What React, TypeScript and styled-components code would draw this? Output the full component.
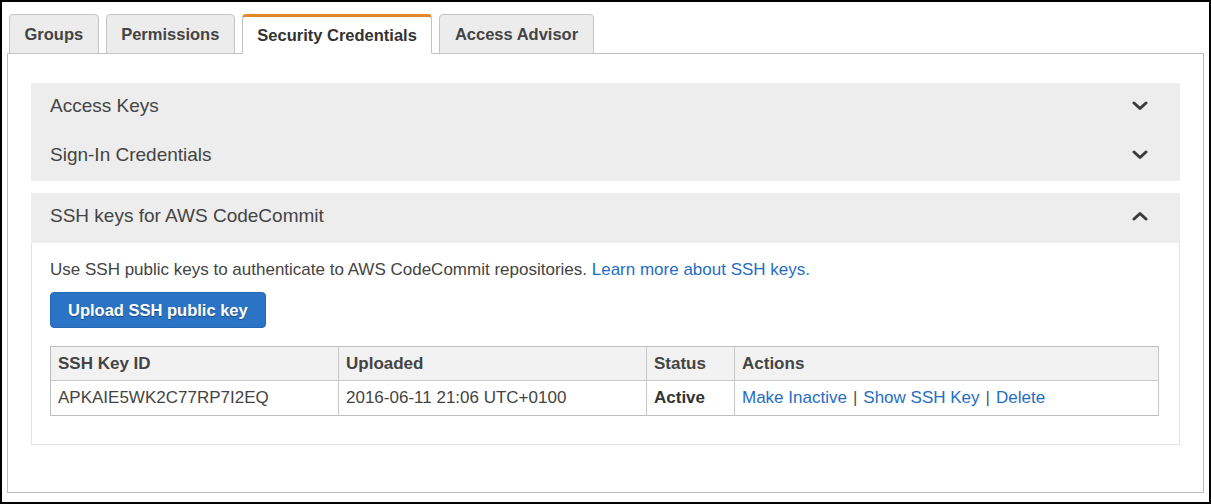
import React from "react";
import styled, { createGlobalStyle } from "styled-components";

const Global = createGlobalStyle`
  html, body { margin: 0; padding: 0; background: #fff; }
  body { font-family: "Liberation Sans", Arial, Helvetica, sans-serif; color: #444; }
  * { box-sizing: border-box; }
`;

const Frame = styled.div`
  width: 1211px;
  height: 504px;
  border: 2px solid #000;
  padding: 12px 5px 0 5px;
  display: flex;
  flex-direction: column;
  background: #fff;
`;

const TabBar = styled.div`
  display: flex;
  gap: 7px;
  padding-left: 2px;
  margin-bottom: -1px;
  position: relative;
  z-index: 1;
`;

const Tab = styled.div<{ $active?: boolean }>`
  height: 40px;
  padding: 0 14.5px;
  display: flex;
  align-items: center;
  font-size: 16.5px;
  font-weight: bold;
  color: ${(p) => (p.$active ? "#333" : "#444")};
  background: ${(p) => (p.$active ? "#fff" : "#ececec")};
  border: 1px solid #c4c4c4;
  border-top: ${(p) => (p.$active ? "3px solid #e0892c" : "1px solid #c4c4c4")};
  border-bottom: 1px solid ${(p) => (p.$active ? "#fff" : "#c4c4c4")};
  border-radius: 4px 4px 0 0;
`;

const Panel = styled.div`
  border: 1px solid #bdbdbd;
  padding: 29px 23px 47px 23px;
  display: flex;
  flex-direction: column;
`;

const SectionGroup = styled.div`
  display: flex;
  flex-direction: column;
  margin-bottom: 12px;
`;

const SectionHeader = styled.div<{ $tall?: boolean }>`
  height: ${(p) => (p.$tall ? "50px" : "49px")};
  background: #ededed;
  display: flex;
  align-items: center;
  justify-content: space-between;
  padding: 0 32px 4px 19px;
  font-size: 19px;
  color: #444;
`;

const SectionBody = styled.div`
  border: 1px solid #e4e4e4;
  border-top: none;
  padding: 17px 18px 28px 18px;
  display: flex;
  flex-direction: column;
  align-items: flex-start;
`;

const Intro = styled.p`
  margin: 0;
  font-size: 17px;
  line-height: 20px;
  color: #444;
`;

const Link = styled.a`
  color: #1f6ec4;
  text-decoration: none;
  cursor: pointer;
`;

const PrimaryButton = styled.button`
  margin-top: 12px;
  height: 36px;
  padding: 0 17px;
  background: #2b73c5;
  border: 1px solid #2467b4;
  border-radius: 4px;
  color: #fff;
  font-family: "Liberation Sans", Arial, sans-serif;
  font-size: 16.5px;
  font-weight: bold;
  text-shadow: 0 1px 1px rgba(0, 0, 0, 0.35);
  cursor: pointer;
`;

const Table = styled.table`
  margin-top: 18px;
  width: 1109px;
  border-collapse: collapse;
  border: 1px solid #bdbdbd;
  font-size: 17px;
  table-layout: fixed;
`;

const Th = styled.th`
  height: 34px;
  text-align: left;
  padding: 0 7px;
  background: #f2f2f2;
  font-weight: bold;
  color: #444;
  border-right: 1px solid #c8c8c8;
  border-bottom: 1px solid #c8c8c8;
`;

const Td = styled.td<{ $bold?: boolean }>`
  height: 35px;
  padding: 0 7px;
  color: ${(p) => (p.$bold ? "#333" : "#444")};
  font-weight: ${(p) => (p.$bold ? "bold" : "normal")};
  border-right: 1px solid #c8c8c8;
  white-space: nowrap;
`;

const Sep = styled.span`
  color: #555;
  margin: 0 6px;
`;

const Chevron: React.FC<{ up?: boolean }> = ({ up }) => (
  <svg width="16" height="10" viewBox="0 0 16 10" aria-hidden>
    <polyline
      points={up ? "2,8 8,2.5 14,8" : "2,2 8,7.5 14,2"}
      fill="none"
      stroke="#3a3a3a"
      strokeWidth="3"
      strokeLinecap="round"
      strokeLinejoin="round"
    />
  </svg>
);

export default function App() {
  return (
    <>
      <Global />
      <Frame>
        <TabBar>
          <Tab>Groups</Tab>
          <Tab>Permissions</Tab>
          <Tab $active>Security Credentials</Tab>
          <Tab>Access Advisor</Tab>
        </TabBar>
        <Panel>
          <SectionGroup>
            <SectionHeader>
              <span>Access Keys</span>
              <Chevron />
            </SectionHeader>
            <SectionHeader>
              <span>Sign-In Credentials</span>
              <Chevron />
            </SectionHeader>
          </SectionGroup>
          <div>
            <SectionHeader $tall>
              <span>SSH keys for AWS CodeCommit</span>
              <Chevron up />
            </SectionHeader>
            <SectionBody>
              <Intro>
                Use SSH public keys to authenticate to AWS CodeCommit repositories.{" "}
                <Link>Learn more about SSH keys.</Link>
              </Intro>
              <PrimaryButton>Upload SSH public key</PrimaryButton>
              <Table>
                <colgroup>
                  <col style={{ width: 288 }} />
                  <col style={{ width: 308 }} />
                  <col style={{ width: 88 }} />
                  <col />
                </colgroup>
                <thead>
                  <tr>
                    <Th>SSH Key ID</Th>
                    <Th>Uploaded</Th>
                    <Th>Status</Th>
                    <Th>Actions</Th>
                  </tr>
                </thead>
                <tbody>
                  <tr>
                    <Td>APKAIE5WK2C77RP7I2EQ</Td>
                    <Td>2016-06-11 21:06 UTC+0100</Td>
                    <Td $bold>Active</Td>
                    <Td>
                      <Link>Make Inactive</Link>
                      <Sep>|</Sep>
                      <Link>Show SSH Key</Link>
                      <Sep>|</Sep>
                      <Link>Delete</Link>
                    </Td>
                  </tr>
                </tbody>
              </Table>
            </SectionBody>
          </div>
        </Panel>
      </Frame>
    </>
  );
}
